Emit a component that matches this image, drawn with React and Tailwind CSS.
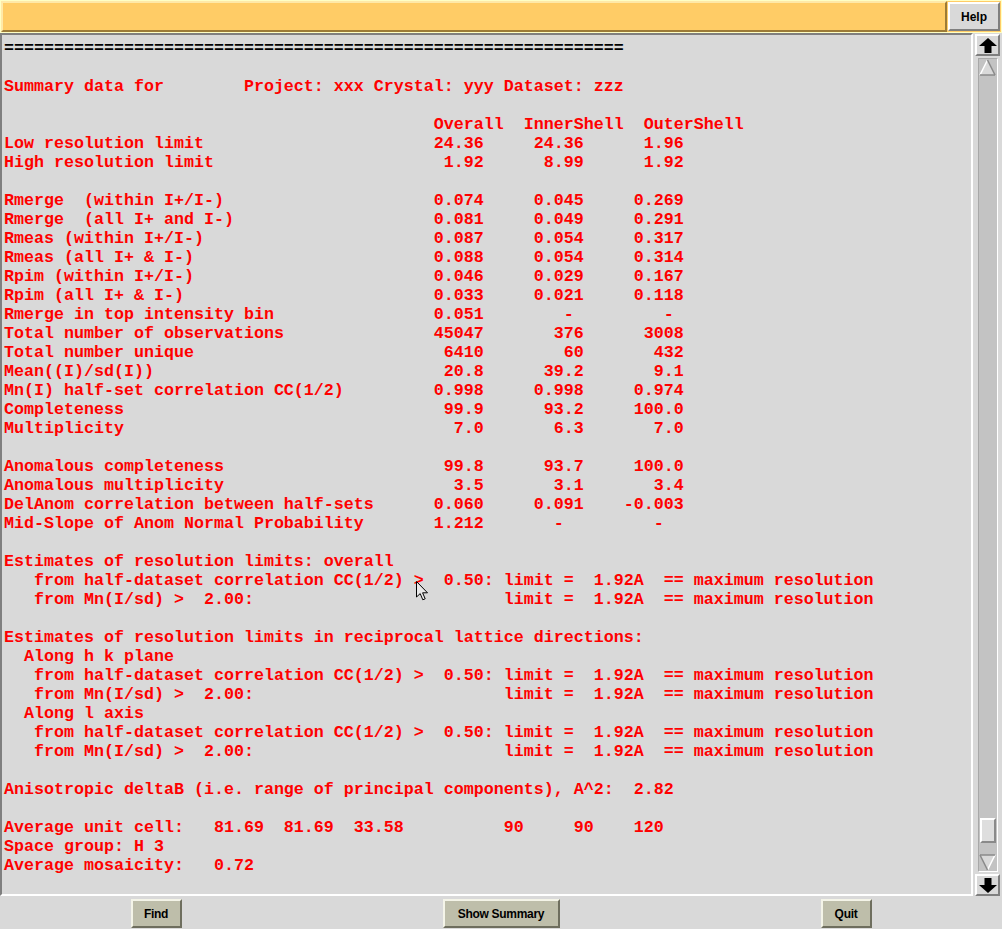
import React from "react";

const row = (label, a, b, c, wb = 10, wc = 10) =>
  label.padEnd(40) + a.padStart(8) + b.padStart(wb) + c.padStart(wc);

const lines = [
  { t: "=".repeat(62), black: true },
  "",
  "Summary data for        Project: xxx Crystal: yyy Dataset: zzz",
  "",
  " ".repeat(43) + "Overall  InnerShell  OuterShell",
  row("Low resolution limit", "24.36", "24.36", "1.96"),
  row("High resolution limit", "1.92", "8.99", "1.92"),
  "",
  row("Rmerge  (within I+/I-)", "0.074", "0.045", "0.269"),
  row("Rmerge  (all I+ and I-)", "0.081", "0.049", "0.291"),
  row("Rmeas (within I+/I-)", "0.087", "0.054", "0.317"),
  row("Rmeas (all I+ & I-)", "0.088", "0.054", "0.314"),
  row("Rpim (within I+/I-)", "0.046", "0.029", "0.167"),
  row("Rpim (all I+ & I-)", "0.033", "0.021", "0.118"),
  row("Rmerge in top intensity bin", "0.051", "-", "-", 9, 10),
  row("Total number of observations", "45047", "376", "3008"),
  row("Total number unique", "6410", "60", "432"),
  row("Mean((I)/sd(I))", "20.8", "39.2", "9.1"),
  row("Mn(I) half-set correlation CC(1/2)", "0.998", "0.998", "0.974"),
  row("Completeness", "99.9", "93.2", "100.0"),
  row("Multiplicity", "7.0", "6.3", "7.0"),
  "",
  row("Anomalous completeness", "99.8", "93.7", "100.0"),
  row("Anomalous multiplicity", "3.5", "3.1", "3.4"),
  row("DelAnom correlation between half-sets", "0.060", "0.091", "-0.003"),
  row("Mid-Slope of Anom Normal Probability", "1.212", "-", "-", 8, 10),
  "",
  "Estimates of resolution limits: overall",
  "   from half-dataset correlation CC(1/2) >  0.50: limit =  1.92A  == maximum resolution",
  "   from Mn(I/sd) >  2.00:                         limit =  1.92A  == maximum resolution",
  "",
  "Estimates of resolution limits in reciprocal lattice directions:",
  "  Along h k plane",
  "   from half-dataset correlation CC(1/2) >  0.50: limit =  1.92A  == maximum resolution",
  "   from Mn(I/sd) >  2.00:                         limit =  1.92A  == maximum resolution",
  "  Along l axis",
  "   from half-dataset correlation CC(1/2) >  0.50: limit =  1.92A  == maximum resolution",
  "   from Mn(I/sd) >  2.00:                         limit =  1.92A  == maximum resolution",
  "",
  "Anisotropic deltaB (i.e. range of principal components), A^2:  2.82",
  "",
  "Average unit cell:   81.69  81.69  33.58          90     90    120",
  "Space group: H 3",
  "Average mosaicity:   0.72",
];

function ArrowBtn({ down }) {
  return (
    <div className="w-[25px] h-[22px] bg-[#d9d9d9] border-2 border-t-white border-l-white border-b-[#7f7f7f] border-r-[#7f7f7f] flex items-center justify-center">
      <svg width="18" height="15" viewBox="0 0 18 15" className={down ? "rotate-180" : ""}>
        <path d="M9 0 L18 8 L12.5 8 L12.5 15 L5.5 15 L5.5 8 L0 8 Z" fill="#000" />
      </svg>
    </div>
  );
}

function Tri({ down }) {
  return (
    <svg width="17" height="17" viewBox="0 0 17 17" className={down ? "rotate-180" : ""}>
      <polygon points="8.5,1 16,16 1,16" fill="#d9d9d9" />
      <line x1="8.5" y1="1" x2="1" y2="16" stroke="#ffffff" strokeWidth="1.5" />
      <line x1="8.5" y1="1" x2="16" y2="16" stroke="#8a8a8a" strokeWidth="1.5" />
      <line x1="1" y1="16" x2="16" y2="16" stroke="#8a8a8a" strokeWidth="1.5" />
    </svg>
  );
}

function Btn({ children, w }) {
  return (
    <div
      className={`${w} h-[29px] bg-[#bebeaa] border-2 border-t-[#f4f4e8] border-l-[#f4f4e8] border-b-[#6e6e5e] border-r-[#6e6e5e] flex items-center justify-center text-[12px] font-bold text-black font-['Liberation_Sans',Arial,sans-serif] tracking-[-0.3px]`}
    >
      {children}
    </div>
  );
}

export default function App() {
  return (
    <div className="w-[1002px] h-[929px] bg-[#d9d9d9] flex flex-col overflow-hidden">
      {/* top bar */}
      <div className="h-[33px] bg-[#ffffc4] p-[1px] flex">
        <div className="flex-1 flex bg-[#ffcc66]">
          <div className="flex-1 border-2 border-t-[#ffe9a8] border-l-[#ffe9a8] border-b-[#9c7b37] border-r-[#9c7b37] bg-[#ffcc66]" />
          <div className="w-[54px] p-[1px] bg-[#ffcc66]">
            <div className="h-full bg-[#d9d9d9] border-2 border-t-white border-l-white border-b-[#7f7f7f] border-r-[#7f7f7f] flex items-center justify-center text-[12px] font-bold text-black font-['Liberation_Sans',Arial,sans-serif]">
              Help
            </div>
          </div>
        </div>
      </div>

      {/* middle */}
      <div className="flex-1 flex min-h-0">
        <div className="relative flex-1 border-2 border-t-[#7f7f7f] border-l-[#7f7f7f] border-b-white border-r-white bg-[#d9d9d9] pt-[4px] pl-[2px] overflow-hidden font-['Liberation_Mono','Courier_New',monospace] font-bold text-[16.67px] text-[#ff0000]">
          {lines.map((l, i) => {
            const txt = typeof l === "string" ? l : l.t;
            const black = typeof l !== "string" && l.black;
            return (
              <div key={i} className={`h-[19px] leading-[19px] whitespace-pre ${black ? "text-black" : ""}`}>
                {txt}
              </div>
            );
          })}
          <svg className="absolute left-[414px] top-[546px]" width="13" height="20" viewBox="0 0 13 20">
            <path d="M0.5 0.5 L0.5 16 L4.2 12.6 L6.8 18.8 L9.2 17.8 L6.6 11.8 L11.5 11.8 Z" fill="#e8e8e8" stroke="#000" strokeWidth="1" />
          </svg>
        </div>
        <div className="w-[29px] flex flex-col items-center pt-[1px] pb-[0px]">
          <ArrowBtn />
          <div className="flex-1 w-[20px] my-[2px] bg-[#c3c3c3] border border-t-[#a8a8a8] border-l-[#a8a8a8] border-b-white border-r-white flex flex-col items-center">
            <Tri />
            <div className="flex-1" />
            <div className="w-[16px] h-[25px] bg-[#dedede] border-2 border-t-white border-l-white border-b-[#8a8a8a] border-r-[#8a8a8a]" />
            <div className="h-[11px]" />
            <Tri down />
          </div>
          <ArrowBtn down />
        </div>
      </div>

      {/* bottom */}
      <div className="h-[33px] flex justify-around items-start pt-[3px]">
        <Btn w="w-[51px]">Find</Btn>
        <Btn w="w-[117px]">Show Summary</Btn>
        <Btn w="w-[51px]">Quit</Btn>
      </div>
    </div>
  );
}
